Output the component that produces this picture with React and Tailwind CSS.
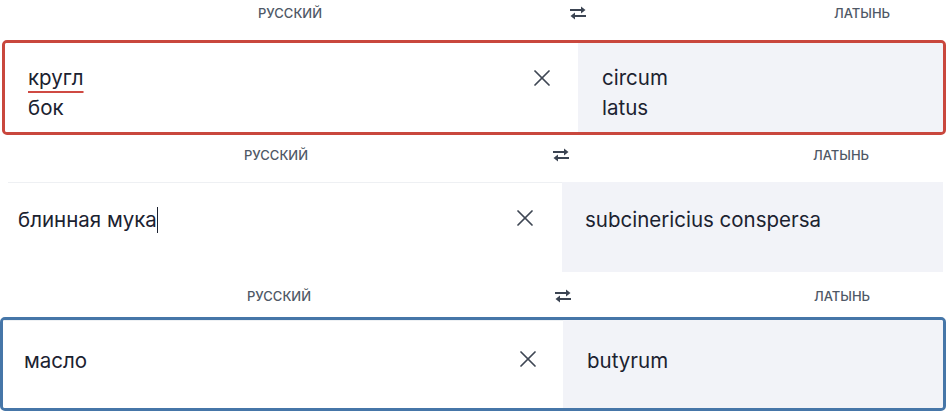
import { X } from "lucide-react";

// swap arrows between the language labels
function SwapIcon() {
  return (
    <svg width="18" height="16" viewBox="0 0 18 16" fill="none">
      <path d="M1 5h12" stroke="#3b4452" strokeWidth="2" />
      <path d="M12 1.5L16.5 5L12 8.5z" fill="#3b4452" />
      <path d="M17 11H5" stroke="#3b4452" strokeWidth="2" />
      <path d="M6 7.5L1.5 11L6 14.5z" fill="#3b4452" />
    </svg>
  );
}

function Header({ h, pt, c1, cs, c3 }) {
  return (
    <div className={`flex items-start ${h} ${pt}`}>
      <div className={`${c1} w-[120px] text-center text-[13px] font-medium leading-4 text-[#4f5866]`}>
        РУССКИЙ
      </div>
      <div className={`${cs} w-[30px] flex justify-center`}>
        <SwapIcon />
      </div>
      <div className={`${c3} w-[100px] text-center text-[13px] font-medium leading-4 text-[#4f5866]`}>
        ЛАТЫНЬ
      </div>
    </div>
  );
}

export default function App() {
  const text = "text-[20.5px] leading-[30px] text-[#1b2230]";
  return (
    <div
      className="w-[948px] h-[413px] bg-white overflow-hidden"
      style={{ fontFamily: "Inter, 'Noto Sans', sans-serif" }}
    >
      {/* block 1 */}
      <div className="h-[135px]">
        <Header h="h-[40px]" pt="pt-[5px]" c1="ml-[230px]" cs="ml-[213px]" c3="ml-[219px]" />
        <div className="ml-[2px] w-[944px] h-[95px] border-[3px] border-[#c9473d] rounded-[5px] flex overflow-hidden">
          <div className="w-[573px] bg-white flex pl-[23px] pr-[22px] pt-[20px]">
            <div className={`flex-1 ${text}`}>
              <div>
                <span className="underline decoration-[#cf4a43] decoration-2 underline-offset-[6px]">кругл</span>
              </div>
              <div>бок</div>
            </div>
            <X size={28} strokeWidth={1.5} className="text-[#3f4754] mt-[1px]" />
          </div>
          <div className={`flex-1 bg-[#f2f3f8] pl-[24px] pt-[20px] ${text}`}>
            <div>circum</div>
            <div>latus</div>
          </div>
        </div>
      </div>

      {/* block 2 */}
      <div className="h-[137px]">
        <Header h="h-[47px]" pt="pt-[12px]" c1="ml-[216px]" cs="ml-[210px]" c3="ml-[215px]" />
        <div className="ml-[8px] w-[935px] h-[90px] flex">
          <div className="w-[554px] border-t border-[#eef0f3] flex pl-[10px] pr-[23px] pt-[22px]">
            <div className={`flex-1 ${text}`}>
              блинная мука
              <span className="inline-block w-px h-[26px] bg-[#1b2230] align-[-6px]" />
            </div>
            <X size={28} strokeWidth={1.5} className="text-[#3f4754] -mt-px" />
          </div>
          <div className={`flex-1 bg-[#f2f3f8] pl-[23px] pt-[23px] ${text}`}>
            subcinericius conspersa
          </div>
        </div>
      </div>

      {/* block 3 */}
      <div>
        <Header h="h-[45px]" pt="pt-[16px]" c1="ml-[219px]" cs="ml-[209px]" c3="ml-[214px]" />
        <div className="w-[946px] h-[94px] border-[3px] border-[#4676a8] rounded-[5px] flex overflow-hidden">
          <div className="w-[560px] bg-white border-t border-[#eef1f4] flex pl-[21px] pr-[21px] pt-[25px]">
            <div className={`flex-1 ${text}`}>масло</div>
            <X size={28} strokeWidth={1.5} className="text-[#3f4754] -mt-px" />
          </div>
          <div className={`flex-1 bg-[#f2f3f8] pl-[24px] pt-[26px] ${text}`}>butyrum</div>
        </div>
      </div>
    </div>
  );
}
